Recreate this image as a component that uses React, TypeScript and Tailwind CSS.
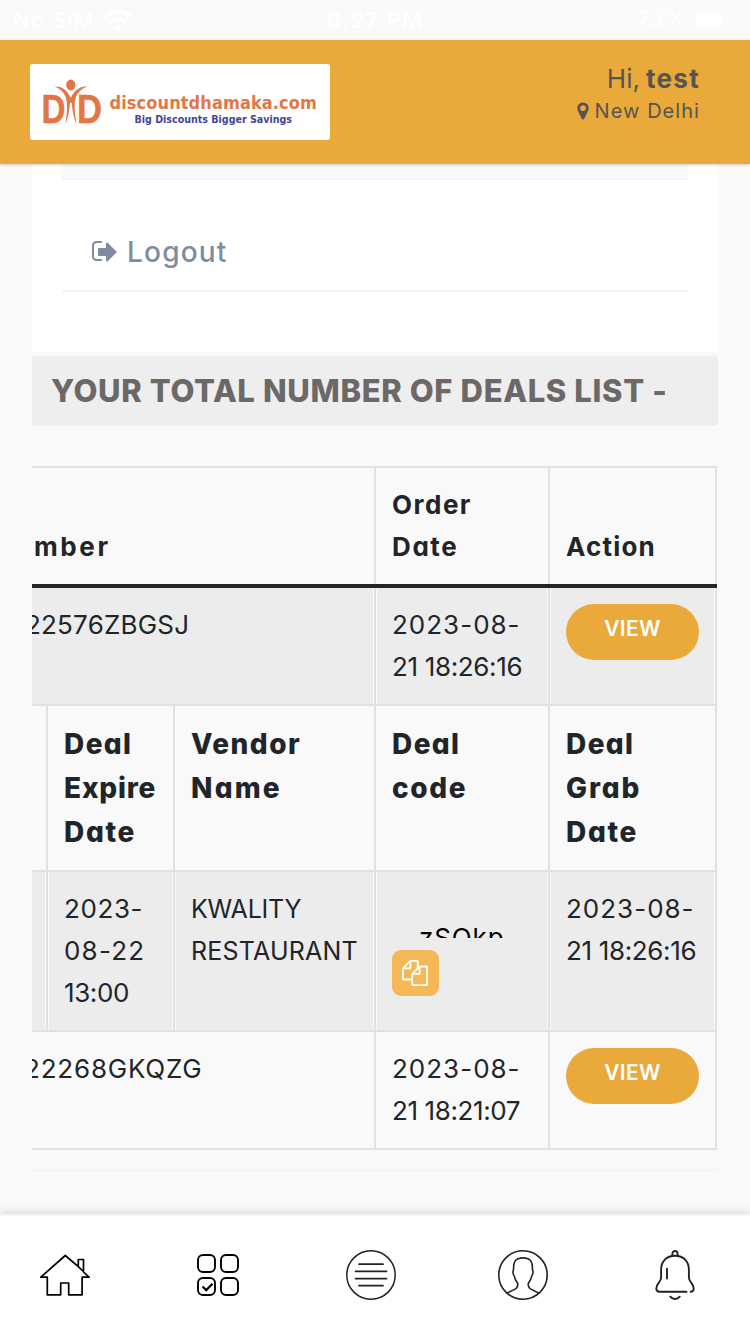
import React from "react";

type Children = { children?: React.ReactNode; className?: string };

function Line({ children, className = "" }: Children) {
  return <span className={`block whitespace-pre ${className}`}>{children}</span>;
}

function Wifi() {
  return (
    <svg width="30" height="22" viewBox="0 0 30 22" fill="none" stroke="white">
      <path d="M2 8.200a18.500 18.500 0 0 1 26 0" strokeWidth="4.600" />
      <path d="M7 13.400a11.500 11.500 0 0 1 16 0" strokeWidth="4.200" />
      <path d="M15 21.500l-4-4.200a5.800 5.800 0 0 1 8 0z" fill="white" stroke="none" />
    </svg>
  );
}

function StatusBar() {
  return (
    <div className="relative flex h-10 items-center justify-between bg-[#fafafa] pl-[13px] pr-[10px] text-white">
      <div className="flex items-center gap-[9px]">
        <span className="text-[22px] leading-10 tracking-[0.9px]">No SIM</span>
        <Wifi />
      </div>
      <span className="absolute left-[327px] top-0 whitespace-pre text-[22px] font-semibold leading-10 tracking-[1.3px]">
        6:27 PM
      </span>
      <div className="flex items-center gap-[5px]">
        <span className="text-[23px] leading-10 tracking-[0.5px]">73%</span>
        <svg width="48" height="24" viewBox="0 0 48 24">
          <rect x="1" y="1.500" width="42" height="21" rx="6.500" fill="none" stroke="white" strokeOpacity="0.6" strokeWidth="1.600" />
          <rect x="4" y="4.500" width="26" height="15" rx="3.500" fill="white" />
          <path d="M45 8.500v7q2.500-1 2.500-3.500t-2.500-3.500z" fill="white" fillOpacity="0.6" />
        </svg>
      </div>
    </div>
  );
}

function Logo() {
  return (
    <div className="flex h-[76px] w-[300px] rounded-[3px] bg-white pl-[13px] pt-[14px]">
      <svg width="60" height="50" viewBox="0 0 60 50" fill="#e27645">
        <g stroke="#e27645" strokeWidth="0.500">
          <text x="-1.400" y="45.300" fontFamily="Liberation Sans" fontWeight="700" fontSize="41" textLength="24" lengthAdjust="spacingAndGlyphs">D</text>
          <text x="34" y="45.300" fontFamily="Liberation Sans" fontWeight="700" fontSize="41" textLength="25" lengthAdjust="spacingAndGlyphs">D</text>
        </g>
        <ellipse cx="27.800" cy="7" rx="4.600" ry="5.400" />
        <path d="M11.500 8.500C20 8 24.500 13 27.800 20C31 13 36 8 44.500 8.500C36 11.500 32.500 17 31.700 25C31.300 32 32.300 39 33.500 46.200C30.500 40 29.500 33 28.800 25.500L27.800 24L26.900 25.500C26.200 33 25.300 40 22.300 46.200C23.500 39 24.400 32 23.900 25C23.200 17 19.500 11.500 11.500 8.500Z" />
      </svg>
      <div className="ml-[6.5px] flex flex-col pt-[14px] font-['DejaVu_Sans_Condensed','DejaVu_Sans',sans-serif] font-bold">
        <Line className="text-[18px] leading-[21px] tracking-[0.1px] text-[#e27645]">discountdhamaka.com</Line>
        <Line className="ml-[25px] text-[10.6px] leading-[12px] text-[#42469a]">Big Discounts Bigger Savings</Line>
      </div>
    </div>
  );
}

function Header() {
  return (
    <header className="relative z-10 flex h-[124px] items-start justify-between bg-[#e9a93b] pl-[30px] pr-[50px] pt-6 text-[#555] shadow-[0_1px_3px_rgba(0,0,0,0.2)]">
      <Logo />
      <div className="flex flex-col items-end">
        <div className="flex h-[30px] items-baseline gap-[6px] whitespace-pre leading-[30px]">
          <span className="text-[26px]">Hi,</span>
          <span className="text-[26px] font-bold tracking-[1.3px]">test</span>
        </div>
        <div className="flex h-[34px] items-center gap-[2px]">
          <svg width="20" height="20" viewBox="0 0 1792 1792" fill="#555">
            <path d="M1152 640q0-106-75-181t-181-75-181 75-75 181 75 181 181 75 181-75 75-181zm256 0q0 109-33 179l-364 774q-16 33-47.500 52t-67.500 19-67.500-19-46.500-52l-365-774q-33-70-33-179 0-212 150-362t362-150 362 150 150 362z" />
          </svg>
          <span className="whitespace-pre text-[20px] tracking-[1.05px]">New Delhi</span>
        </div>
      </div>
    </header>
  );
}

function AccountMenu() {
  return (
    <section className="mx-8 h-[188px] w-[686px] shrink-0 bg-white pl-[30px] pr-[30px]">
      <div className="h-4 border-b-2 border-[#eff5fb] bg-[#f8faff]" />
      <div className="flex h-28 items-center gap-[7px] border-b-2 border-[#eff5fc] pl-[30px] pt-[33px] text-[#7f8b9e]">
        <svg width="28" height="28" viewBox="0 0 1792 1792" fill="#7f8b9e">
          <path d="M640 1376q0 4 1 20t.5 26.500-3 23.500-10 19.500-20.500 6.500h-320q-119 0-203.500-84.500t-84.500-203.500v-704q0-119 84.500-203.500t203.500-84.500h320q13 0 22.500 9.500t9.500 22.500q0 4 1 20t.5 26.500-3 23.500-10 19.500-20.500 6.500h-320q-66 0-113 47t-47 113v704q0 66 47 113t113 47h312l11.500 1 11.500 3 8 5.500 7 9 2 13.500zm928-480q0 26-19 45l-544 544q-19 19-45 19t-45-19-19-45v-288h-448q-26 0-45-19t-19-45v-384q0-26 19-45t45-19h448v-288q0-26 19-45t45-19 45 19l544 544q19 19 19 45z" />
        </svg>
        <span className="text-[28px] font-medium leading-[42px] tracking-[1.2px]">Logout</span>
      </div>
    </section>
  );
}

function Row({ children, className = "" }: Children) {
  return <div className={`flex border-b-2 border-[#dee2e6] ${className}`}>{children}</div>;
}

function Cell({ children, className = "" }: Children) {
  return (
    <div className={`shrink-0 border-r-2 border-[#dee2e6] py-4 pl-4 text-[26px] leading-[42px] ${className}`}>
      {children}
    </div>
  );
}

function GreyCell({ children, className = "" }: Children) {
  return (
    <div className={`flex shrink-0 border-r-2 border-[#dee2e6] px-px text-[26px] leading-[42px] ${className}`}>
      <div className="flex-1 bg-[#ececec] py-4 pl-[15px]">{children}</div>
    </div>
  );
}

function ViewButton() {
  return (
    <button className="block h-14 w-[133px] rounded-[28px] bg-[#e9a93b] pb-[6px] text-[21px] font-semibold leading-[50px] tracking-[0.3px] text-white">
      VIEW
    </button>
  );
}

function CopyButton() {
  return (
    <button className="flex h-[46px] w-[47px] items-center justify-center rounded-[9px] bg-[#f4b856] pr-[2px]">
      <svg width="26" height="26" viewBox="0 0 1792 1792" fill="white">
        <path d="M1696 384q40 0 68 28t28 68v1216q0 40-28 68t-68 28h-960q-40 0-68-28t-28-68v-288h-544q-40 0-68-28t-28-68v-672q0-40 20-88t48-76l408-408q28-28 76-48t88-20h416q40 0 68 28t28 68v328q68-40 128-40h416zm-544 213l-299 299h299v-299zm-640-384l-299 299h299v-299zm196 647l316-316v-416h-384v416q0 40-28 68t-68 28h-416v640h512v-256q0-40 20-88t48-76zm956 804v-1152h-384v416q0 40-28 68t-68 28h-416v640h896z" />
      </svg>
    </button>
  );
}

function DealsTable() {
  return (
    <div className="ml-px mt-10 flex w-[685px] flex-col overflow-hidden border-t-2 border-[#dee2e6] text-[#212529]">
      <div className="flex border-b-4 border-[#212529]">
        <Cell className="w-[344px] font-bold">
          <Line className="-ml-[14px] pt-[42px] tracking-[2.6px]">mber</Line>
        </Cell>
        <Cell className="w-[174px] font-bold">
          <Line className="tracking-[1.5px]">Order</Line>
          <Line className="tracking-[1.6px]">Date</Line>
        </Cell>
        <Cell className="w-[167px] pt-[58px] font-bold">
          <Line className="tracking-[1.2px]">Action</Line>
        </Cell>
      </div>
      <Row>
        <div className="flex w-[344px] shrink-0 border-r-2 border-[#dee2e6] pr-px text-[26px] leading-[42px]">
          <div className="flex-1 overflow-hidden bg-[#ececec] py-4">
            <Line className="-ml-[7px] tracking-[0.2px]">22576ZBGSJ</Line>
          </div>
        </div>
        <GreyCell className="w-[174px]">
          <Line className="tracking-[1px]">2023-08-</Line>
          <Line className="tracking-[-0.35px]">21 18:26:16</Line>
        </GreyCell>
        <GreyCell className="w-[167px]">
          <ViewButton />
        </GreyCell>
      </Row>
      <Row className="font-extrabold">
        <div className="w-4 shrink-0 border-r-2 border-[#dee2e6]" />
        <Cell className="w-[127px] !text-[28px] !leading-[44px]">
          <Line className="tracking-[1.4px]">Deal</Line>
          <Line className="tracking-[0.8px]">Expire</Line>
          <Line className="tracking-[1.7px]">Date</Line>
        </Cell>
        <Cell className="w-[201px] !text-[28px] !leading-[44px]">
          <Line className="tracking-[1.5px]">Vendor</Line>
          <Line className="tracking-[2.2px]">Name</Line>
        </Cell>
        <Cell className="w-[174px] !text-[28px] !leading-[44px]">
          <Line className="tracking-[1.4px]">Deal</Line>
          <Line className="tracking-[1.6px]">code</Line>
        </Cell>
        <Cell className="w-[167px] !text-[28px] !leading-[44px]">
          <Line className="tracking-[1.4px]">Deal</Line>
          <Line className="tracking-[1.9px]">Grab</Line>
          <Line className="tracking-[1.7px]">Date</Line>
        </Cell>
      </Row>
      <Row>
        <div className="flex w-4 shrink-0 border-r-2 border-[#dee2e6] pr-px">
          <div className="flex-1 bg-[#ececec]" />
        </div>
        <GreyCell className="w-[127px]">
          <Line className="tracking-[0.6px]">2023-</Line>
          <Line className="tracking-[1.2px]">08-22</Line>
          <Line className="tracking-[-0.4px]">13:00</Line>
        </GreyCell>
        <GreyCell className="w-[201px]">
          <Line className="text-[25px] tracking-[-0.2px]">KWALITY</Line>
          <Line className="text-[25px] tracking-[0.2px]">RESTAURANT</Line>
        </GreyCell>
        <GreyCell className="w-[174px]">
          <div className="mb-3 ml-[27px] mt-[30px] h-5 overflow-hidden text-black">
            <Line className="-mt-px tracking-[0.9px]">zSOkp</Line>
          </div>
          <CopyButton />
        </GreyCell>
        <GreyCell className="w-[167px]">
          <Line className="tracking-[1px]">2023-08-</Line>
          <Line className="tracking-[-0.35px]">21 18:26:16</Line>
        </GreyCell>
      </Row>
      <Row>
        <Cell className="w-[344px]">
          <Line className="-ml-[24px] tracking-[0.8px]">22268GKQZG</Line>
        </Cell>
        <Cell className="w-[174px]">
          <Line className="tracking-[1px]">2023-08-</Line>
          <Line className="tracking-[-0.4px]">21 18:21:07</Line>
        </Cell>
        <Cell className="w-[167px]">
          <ViewButton />
        </Cell>
      </Row>
    </div>
  );
}

function Deals() {
  return (
    <section className="ml-[31px] h-[820px] w-[688px] shrink-0 border-b-2 border-[#f6f6f6] bg-[#f9f9f9] pt-1">
      <h2 className="ml-px h-[70px] w-[686px] whitespace-pre rounded-[4px] bg-[#eee] pl-[19px] text-[31px] font-extrabold leading-[70px] tracking-[0.64px] text-[#6d6868]">
        YOUR TOTAL NUMBER OF DEALS LIST -
      </h2>
      <DealsTable />
    </section>
  );
}

function TabBar() {
  return (
    <nav className="relative flex h-[120px] items-center justify-between border-t-2 border-[#f5f5f5] bg-white pl-10 pr-[50px] shadow-[0_-1px_10px_rgba(0,0,0,0.16)]">
      <svg width="50" height="50" viewBox="0 0 50 50" fill="none" stroke="#000" strokeWidth="1.700" strokeLinejoin="round">
        <path d="M25.300 5.500L.8 27.200h6.500v17.600h13.400V33h8v11.800h13.400V27.200h7L43.500 22V9.500h-5.200v7.200z" />
        <path d="M38.300 16.700l5.200 4.800" />
      </svg>
      <svg width="50" height="50" viewBox="0 0 50 50" fill="none" stroke="#000" strokeWidth="1.900">
        <rect x="5" y="5" width="17" height="17" rx="5" />
        <rect x="28" y="5" width="17" height="17" rx="5" />
        <rect x="5" y="28" width="17" height="17" rx="5" />
        <rect x="28" y="28" width="17" height="17" rx="5" />
        <path d="M9.500 36.500l3.700 3.600 6.300-6.300" strokeWidth="2.200" />
      </svg>
      <svg className="-mr-px ml-px" width="50" height="50" viewBox="0 0 50 50" fill="none" stroke="#222" strokeWidth="1.500" strokeLinecap="round">
        <circle cx="25" cy="25" r="24.200" />
        <path d="M13 14.200h24M9.500 21.300h31M9.500 28.600h31M13 35.700h24" strokeWidth="1.700" />
      </svg>
      <svg width="50" height="50" viewBox="0 0 50 50" fill="none" stroke="#222" strokeWidth="1.600" strokeLinejoin="round">
        <circle cx="25" cy="25" r="24.200" />
        <path d="M9 43.200l9-4.600c1.200-.8 1.800-2 1.800-5.100-2-2.600-3.200-5-3.500-7.500-1.300-1.300-1.800-4.500-.7-6.500-.4-7 1.200-11.600 9.400-11.600s9.800 4.600 9.400 11.600c1.100 2 .6 5.200-.7 6.500-.3 2.500-1.500 4.900-3.500 7.500 0 3.100.6 4.300 1.800 5.100l9 4.600" />
      </svg>
      <svg width="50" height="50" viewBox="0 0 50 50" fill="none" stroke="#222" strokeWidth="1.900" strokeLinecap="round" strokeLinejoin="round">
        <path d="M36.500 41.800H9.500c-2.300 0-3.200-1.300-3.200-3.200 0-5.600 4.800-6.200 4.800-11V19.500C11.100 11.500 16.500 5.700 25 5.700s13.900 5.800 13.900 13.800v8.100c0 4.800 4.800 5.400 4.800 11 0 1.800-.8 3.200-3 3.200" />
        <path d="M22.400 5.500V3.800c0-3.800 5.200-3.800 5.200 0v1.700M17 18.800v9.700M20.300 46.700c2.500 3 6.900 3 9.400 0" />
      </svg>
    </nav>
  );
}

export default function App() {
  return (
    <div className="flex h-[1334px] w-[750px] flex-col overflow-hidden bg-[#fafafa] font-['Inter',sans-serif] [font-feature-settings:'cv11']">
      <StatusBar />
      <Header />
      <main className="flex h-[1050px] flex-col">
        <AccountMenu />
        <Deals />
      </main>
      <TabBar />
    </div>
  );
}
